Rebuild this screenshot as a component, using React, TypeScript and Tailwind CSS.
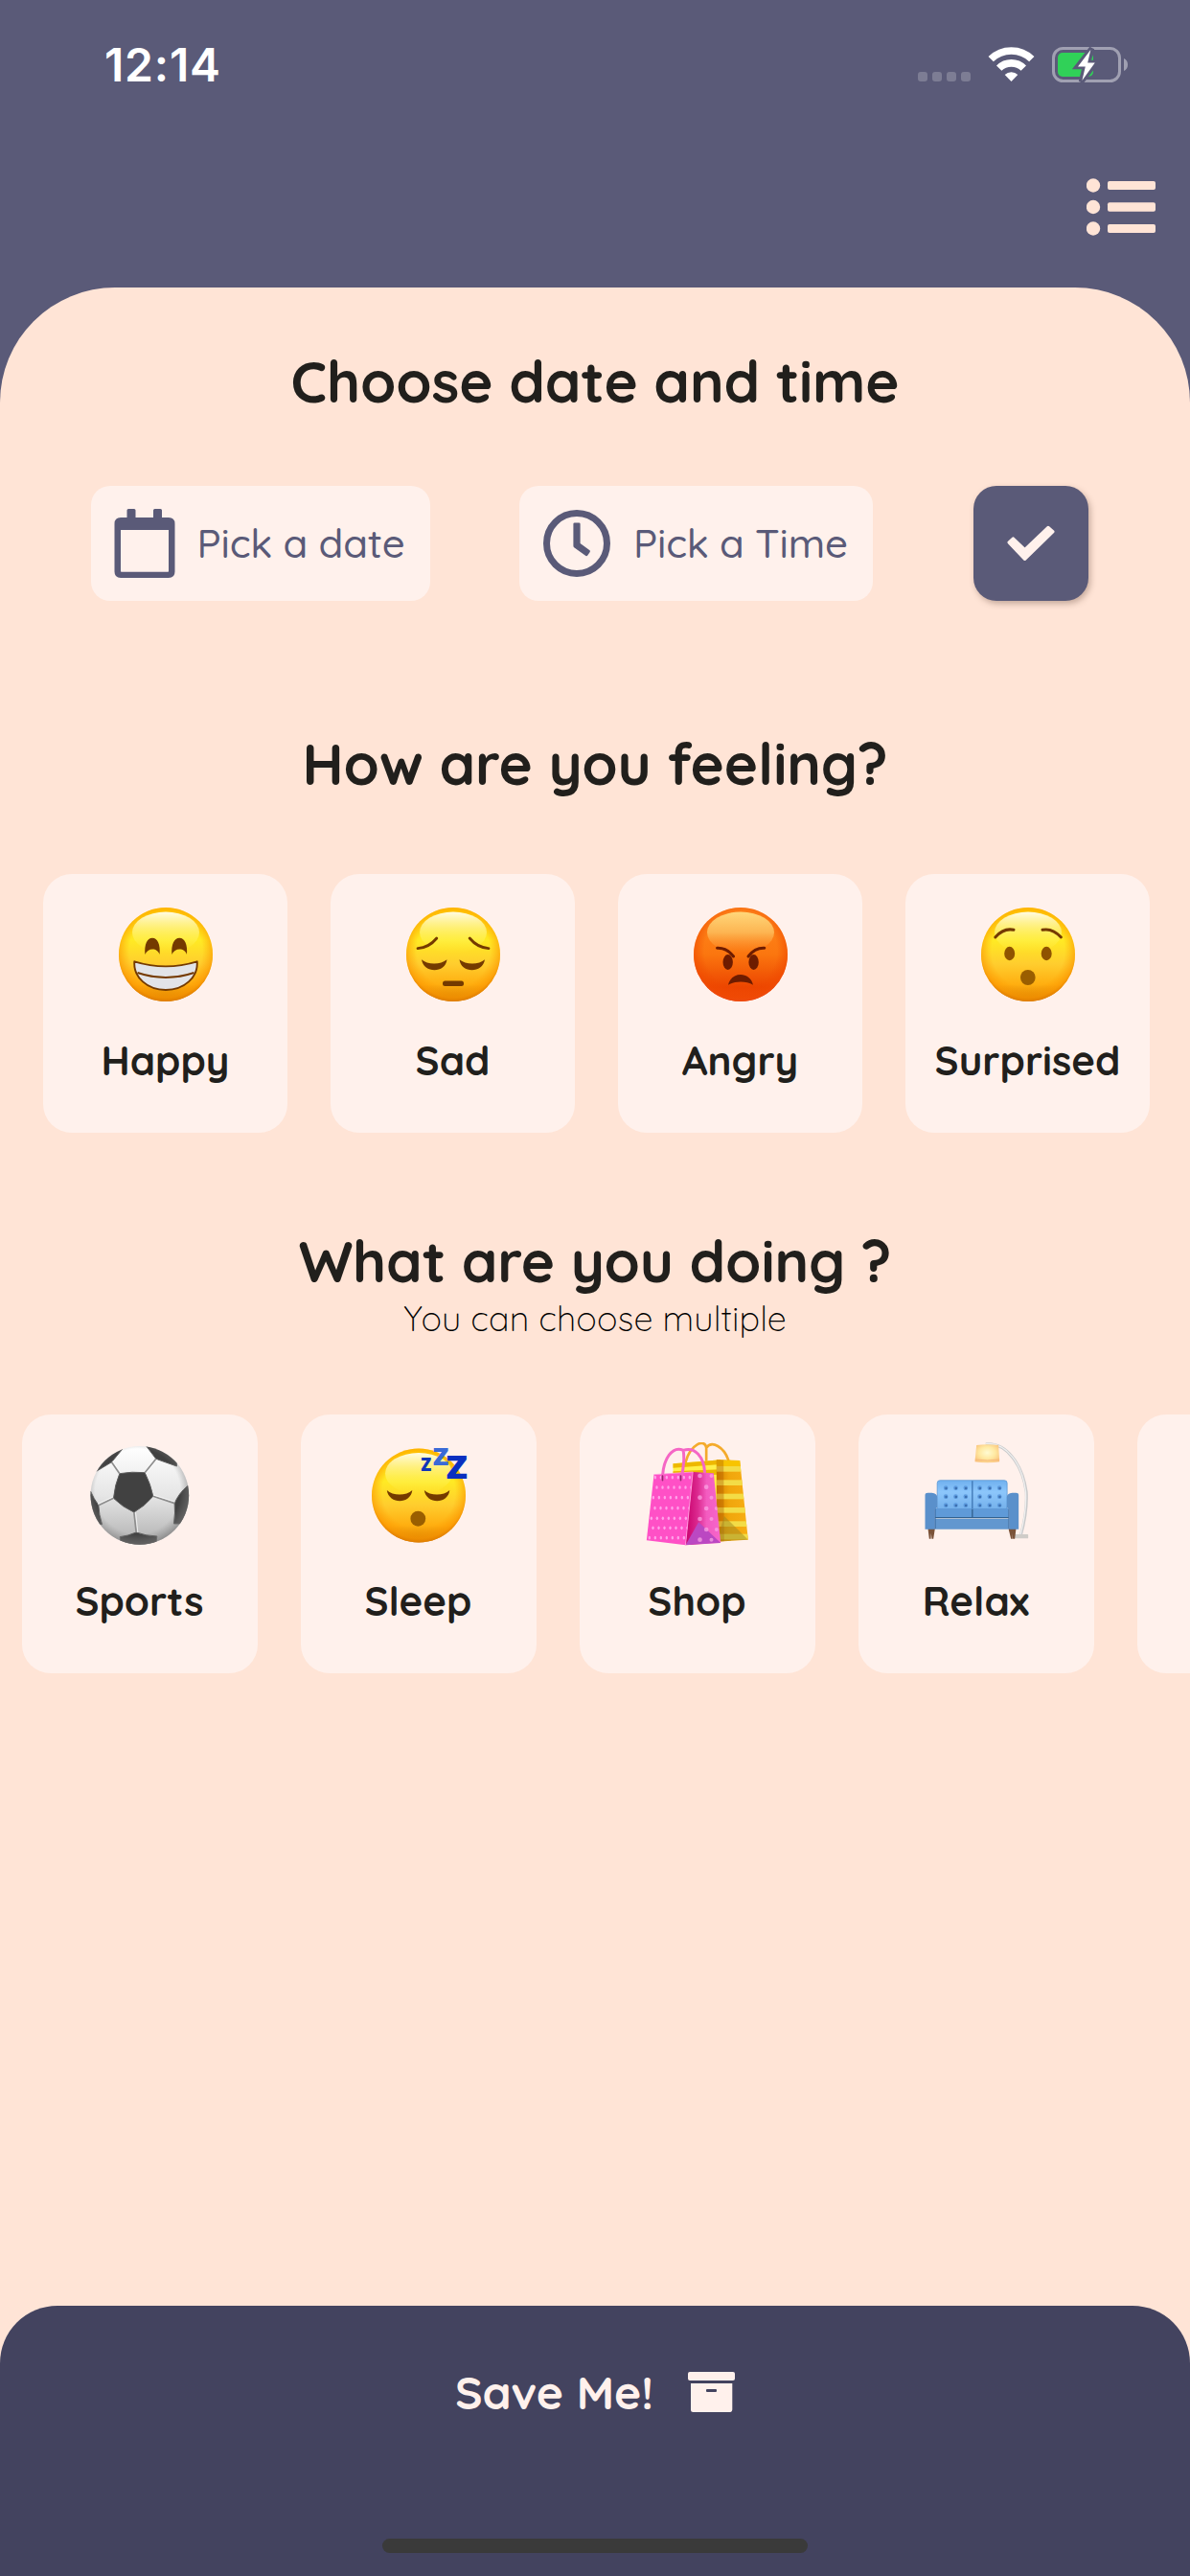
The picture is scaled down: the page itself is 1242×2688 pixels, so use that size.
import React from "react";

const BROWN = "#743a00";

function Face({ id, angry = false, cy = 55, children }: { id: string; angry?: boolean; cy?: number; children: React.ReactNode }) {
  return (
    <svg width="110" height="110" viewBox="0 0 110 110" className="overflow-visible">
      <defs>
        <linearGradient id={`${id}-base`} x1="0" y1="0" x2="0" y2="1">
          {angry ? (
            <>
              <stop offset="0" stopColor="#ff8a1e" />
              <stop offset="0.5" stopColor="#fb760f" />
              <stop offset="0.85" stopColor="#ec4500" />
              <stop offset="1" stopColor="#ee4a0c" />
            </>
          ) : (
            <>
              <stop offset="0" stopColor="#ffc400" />
              <stop offset="0.35" stopColor="#ffea24" />
              <stop offset="0.6" stopColor="#ffcd2e" />
              <stop offset="0.82" stopColor="#ffae10" />
              <stop offset="1" stopColor="#cf7800" />
            </>
          )}
        </linearGradient>
        <radialGradient id={`${id}-edge`} cx="0.5" cy="0.46" r="0.54">
          <stop offset="0.72" stopColor={angry ? "#f04a00" : "#ff9d00"} stopOpacity="0" />
          <stop offset="0.92" stopColor={angry ? "#f04a00" : "#fb9500"} stopOpacity="0.6" />
          <stop offset="1" stopColor={angry ? "#ee4a10" : "#e07c00"} stopOpacity="0.9" />
        </radialGradient>
        <linearGradient id={`${id}-shine`} x1="0" y1="0" x2="0" y2="1">
          <stop offset="0" stopColor={angry ? "#ffdc80" : "#fffff0"} stopOpacity="0.95" />
          <stop offset="0.5" stopColor={angry ? "#fdc766" : "#fff88a"} stopOpacity={angry ? "0.75" : "0.6"} />
          <stop offset="1" stopColor={angry ? "#fda040" : "#fff040"} stopOpacity="0" />
        </linearGradient>
      </defs>
      <circle cx="55" cy={cy} r="49" fill={`url(#${id}-base)`} />
      <circle cx="55" cy={cy} r="49" fill={`url(#${id}-edge)`} />
      <ellipse cx="55" cy={cy - 23} rx="35" ry="21.5" fill={`url(#${id}-shine)`} />
      {children}
    </svg>
  );
}

function Happy() {
  return (
    <Face id="happy">
      <path d="M33.4 55C32.5 45 35.5 37.8 41 37.8S49.6 45 48.6 55C46.5 47.5 36 47.5 33.4 55Z" fill={BROWN} />
      <path d="M61.4 55C60.5 45 63.8 37.8 69.3 37.8S78 45 77 55C75 47.5 64 47.5 61.4 55Z" fill={BROWN} />
      <path d="M22.3 62.3C44 69 66 69 87.7 62.3C89 79 74 92 55 92S21 79 22.3 62.3Z" fill="#e2e4e8" stroke={BROWN} strokeWidth="1.9" strokeLinejoin="round" />
      <path d="M25.5 74C44 80.5 66 80.5 84.5 74" fill="none" stroke={BROWN} strokeWidth="2" />
    </Face>
  );
}

function Sad() {
  return (
    <Face id="sad">
      <path d="M18 48.6C26 48 32.5 44.5 37.8 38" fill="none" stroke={BROWN} strokeWidth="2.8" strokeLinecap="round" />
      <path d="M92 48.6C84 48 77.5 44.5 72.2 38" fill="none" stroke={BROWN} strokeWidth="2.8" strokeLinecap="round" />
      <path d="M22 60.3C28 66 42 66 48.5 60.3C47 75 24 75 22 60.3Z" fill={BROWN} />
      <path d="M61.5 60.3C68 66 82 66 88 60.3C86 75 63 75 61.5 60.3Z" fill={BROWN} />
      <rect x="44" y="82.6" width="22" height="5.4" rx="2.5" fill={BROWN} />
    </Face>
  );
}

function Angry() {
  const c = "#6e1c00";
  return (
    <Face id="angry" angry>
      <path d="M30.5 48.3C37 48 43 51 47.5 57" fill="none" stroke={c} strokeWidth="3" strokeLinecap="round" />
      <path d="M79.8 48.3C73.5 48 67.5 51 63 57" fill="none" stroke={c} strokeWidth="3" strokeLinecap="round" />
      <ellipse cx="41.7" cy="63" rx="5.2" ry="7.9" fill={c} />
      <ellipse cx="68.6" cy="63" rx="5.2" ry="7.9" fill={c} />
      <path d="M42 86.800C45 72.500 65 72.500 68 86.800C61 82.500 49 82.500 42 86.800Z" fill={c} />
    </Face>
  );
}

function Surprised() {
  return (
    <Face id="surprised">
      <path d="M20.8 37C26 31 33 27.8 40 29.3" fill="none" stroke={BROWN} strokeWidth="3" strokeLinecap="round" />
      <path d="M89.4 37C84 31 77 27.8 70 29.3" fill="none" stroke={BROWN} strokeWidth="3" strokeLinecap="round" />
      <ellipse cx="35.7" cy="54" rx="5.5" ry="7.2" fill="#8f5300" />
      <ellipse cx="74.2" cy="54" rx="5.5" ry="7.2" fill="#8f5300" />
      <ellipse cx="54.8" cy="79" rx="7.8" ry="8" fill="#9a5e00" />
    </Face>
  );
}

function Sleep() {
  return (
    <Face id="sleep" cy={55.5}>
      <path d="M21.8 50C28 56 42 56 48.3 50C46.5 65 24 65 21.8 50Z" fill={BROWN} />
      <path d="M60.8 50C67 56 81 56 87.3 50C85.5 65 63 65 60.8 50Z" fill={BROWN} />
      <ellipse cx="54.3" cy="79.7" rx="7.9" ry="8" fill="#9a5e00" />
      <g className="font-['Open_Sans'] font-extrabold">
        <text x="57.2" y="30" fontSize="18.5" fill="#0f36b8" textLength="11" lengthAdjust="spacingAndGlyphs">Z</text>
        <text x="69.7" y="24" fontSize="25.5" fill="#3a6ad6" textLength="16.6" lengthAdjust="spacingAndGlyphs">Z</text>
        <text x="83.6" y="38" fontSize="34" fill="#0a30c0" textLength="22.5" lengthAdjust="spacingAndGlyphs">Z</text>
      </g>
    </Face>
  );
}

function Ball() {
  return (
    <svg width="110" height="110" viewBox="0 0 110 110">
      <defs>
        <linearGradient id="ball-base" x1="0" y1="0" x2="0" y2="1">
          <stop offset="0" stopColor="#ffffff" />
          <stop offset="0.5" stopColor="#e6e6e6" />
          <stop offset="1" stopColor="#b0b0b0" />
        </linearGradient>
        <radialGradient id="ball-edge" cx="0.48" cy="0.46" r="0.54">
          <stop offset="0.8" stopColor="#888" stopOpacity="0" />
          <stop offset="1" stopColor="#777" stopOpacity="0.6" />
        </radialGradient>
        <clipPath id="ball-clip"><circle cx="196" cy="211" r="154" /></clipPath>
      </defs>
      <g transform="translate(-10.5 -15) scale(0.33333)">
        <circle cx="196" cy="211" r="154" fill="url(#ball-base)" />
        <g clipPath="url(#ball-clip)">
          <g fill="#414141" stroke="#5c5c5c" strokeWidth="3" strokeLinejoin="round">
            <path d="M133 143Q172 136 212 140Q230 175 238 214Q212 245 178 264Q142 248 114 220Q118 178 133 143Z" />
            <path d="M142 66L108 107L60 136L60 60Z" />
            <path d="M216 56L247 97L312 120L310 50Z" />
            <path d="M345 182Q318 205 305 236Q308 265 303 300L370 300L370 182Z" />
            <path d="M134 341Q160 338 185 327Q215 338 250 339L245 380L140 380Z" />
            <path d="M42 198Q52 222 67 242Q68 272 78 302L30 302Z" />
          </g>
          <path d="M108 107L133 143M212 140L247 97M238 214L305 236M178 264L185 327M114 220L67 242" fill="none" stroke="#8d8d8d" strokeWidth="5" />
          <path d="M112 104L137 139M216 143L251 100M239 210L306 231M183 264L190 327M112 216L65 238" fill="none" stroke="#f8f8f8" strokeWidth="2.5" />
        </g>
        <circle cx="196" cy="211" r="154" fill="url(#ball-edge)" />
      </g>
    </svg>
  );
}

function Bags() {
  const rows = [155, 186, 218, 251, 283, 313, 344];
  const sideStripes = [120, 163, 206, 249, 292, 332];
  return (
    <svg width="110" height="110" viewBox="0 0 110 110">
      <defs>
        <linearGradient id="bag-side" x1="0" y1="0" x2="1" y2="0">
          <stop offset="0" stopColor="#c9006c" />
          <stop offset="0.35" stopColor="#dc2a90" />
          <stop offset="0.6" stopColor="#f35cc0" />
          <stop offset="1" stopColor="#f666cc" />
        </linearGradient>
        <linearGradient id="bag-gold" x1="0" y1="0" x2="1" y2="0">
          <stop offset="0" stopColor="#d88400" />
          <stop offset="0.4" stopColor="#f0a60c" />
          <stop offset="1" stopColor="#f8ae14" />
        </linearGradient>
        <clipPath id="gold-clip"><path d="M262 100L335 102L361 350L262 356Z" /></clipPath>
        <clipPath id="pink-clip"><path d="M66 146L188 138L165 367L43 352Z" /></clipPath>
        <clipPath id="pink-side-clip"><path d="M188 138L253 142L275 360L165 367Z" /></clipPath>
      </defs>
      <g transform="translate(-12.5 -15) scale(0.33333)">
        <path d="M165 108C180 50 226 32 230 62V102M230 62C248 38 285 60 299 100" fill="none" stroke="#f4ab2c" strokeWidth="8" strokeLinecap="round" />
        <path d="M126 112L275 100V250L126 200Z" fill="#fff04a" />
        <path d="M126 112L275 100V114L126 125ZM126 136L275 130V146L126 148Z" fill="#eeb800" />
        <path d="M262 100L335 102L361 350L262 356Z" fill="url(#bag-gold)" />
        <g clipPath="url(#gold-clip)">
          <path d="M260 95H340V120H260Z" fill="#f8c400" />
          {sideStripes.map((y) => <rect key={y} x="255" y={y} width="110" height="17" fill="#f3dc46" />)}
          <path d="M255 95H284L286 360H255Z" fill="#a85200" opacity="0.35" />
          <path d="M286 276L361 350L262 356Z" fill="#a08a20" opacity="0.5" />
        </g>
        <path d="M188 138L253 142L275 360L165 367Z" fill="url(#bag-side)" />
        <g clipPath="url(#pink-side-clip)">
          <path d="M206 295L275 360L165 367Z" fill="#bb48c2" />
          {[150, 185, 218, 252, 285, 318, 350].map((y, i) => (
            <g key={y} fill="#fba8e6" opacity="0.7">
              <circle cx={i % 2 ? 230 : 210} cy={y} r="7" />
              <circle cx={i % 2 ? 262 : 246} cy={y} r="6" />
            </g>
          ))}
        </g>
        <path d="M66 146L188 138L165 367L43 352Z" fill="#ff50c6" />
        <g clipPath="url(#pink-clip)" fill="#ffa2ea">
          {rows.map((y, r) => [0, 1, 2, 3, 4, 5, 6].map((c) => (
            <ellipse key={`${r}-${c}`} cx={70 - r * 3 + c * 18 + (r % 2) * 8} cy={y} rx="3.6" ry="5.5" />
          )))}
        </g>
        <path d="M66 146L188 138M188 138L165 367" stroke="#ff9adf" strokeWidth="2.5" fill="none" />
        <path d="M93 162C93 95 125 55 158 70Q164 110 150 162M158 70C195 58 222 90 225 138" fill="none" stroke="#f567c5" strokeWidth="9" strokeLinecap="round" />
        <path d="M93 150V164M150 150V164" stroke="#9a2070" strokeWidth="5" strokeLinecap="round" />
      </g>
    </svg>
  );
}

function Sofa() {
  return (
    <svg width="110" height="110" viewBox="0 0 110 110">
      <defs>
        <linearGradient id="sofa-back" x1="0" y1="0" x2="0" y2="1">
          <stop offset="0" stopColor="#6fb0ee" />
          <stop offset="0.4" stopColor="#8cc6fb" />
          <stop offset="1" stopColor="#74b0ea" />
        </linearGradient>
        <radialGradient id="lamp-glow" cx="0.5" cy="0.45" r="0.65">
          <stop offset="0" stopColor="#fffbd2" />
          <stop offset="0.5" stopColor="#ffe9a2" />
          <stop offset="1" stopColor="#f9bf78" />
        </radialGradient>
      </defs>
      <g transform="translate(-13.5 -15) scale(0.33333)">
        <path d="M235 51C300 45 350 115 362 200C365 250 355 300 344 338" fill="none" stroke="#c9cacb" strokeWidth="9" />
        <path d="M235 50C300 44 350 113 360 200C363 250 353 300 343 336" fill="none" stroke="#eeeeee" strokeWidth="4" />
        <rect x="322" y="333" width="46" height="13" rx="2" fill="#cfccc8" />
        <path d="M206 54Q240 50 275 54L278 106Q240 112 201 106Z" fill="url(#lamp-glow)" />
        <path d="M202 99Q240 105 278 99" fill="none" stroke="#f5b878" strokeWidth="3" />
        <path d="M54 315H76L71 347H66L64 330L63 347H58ZM306 315H330L326 347H320L318 330L319 347H314Z" fill="#7a5238" />
        <rect x="83" y="164" width="219" height="92" rx="9" fill="url(#sofa-back)" stroke="#4f8fd2" strokeWidth="2" />
        <path d="M193 166V280" stroke="#3e76b4" strokeWidth="4" />
        {[188, 215, 242].map((y) => [110, 141, 172, 216, 247, 278].map((x) => (
          <g key={`${x}-${y}`}>
            <circle cx={x} cy={y} r="7" fill="#5c9ade" />
            <circle cx={x + 1} cy={y + 1} r="3.8" fill="#3d6fae" />
          </g>
        )))}
        <path d="M76 252H307V280H76Z" fill="#5f9ad8" />
        <path d="M193 254V280M76 281H307" stroke="#32618f" strokeWidth="4" />
        <path d="M76 284H307V317H76Z" fill="#6297cf" />
        <path d="M45 209Q45 203 53 203H66Q83 205 83 216V250L76 254V317H45Z" fill="#5a90cb" />
        <path d="M338 209Q338 203 330 203H318Q301 205 301 216V250L308 254V317H338Z" fill="#5a90cb" />
        <path d="M77 254V315M307 254V315" stroke="#34659b" strokeWidth="2.5" />
      </g>
    </svg>
  );
}

function StatusIcons() {
  return (
    <svg width="222" height="40" viewBox="957 48 222 40">
      {[958, 973, 988, 1003].map((x) => <rect key={x} x={x} y="75" width="10" height="10" rx="3" fill="#7d7d94" />)}
      <g fill="none" stroke="#fff" strokeWidth="7.6">
        <path d="M1034.2 61.6A30.5 30.5 0 0 1 1076.8 61.6" />
        <path d="M1042.7 71.2A18 18 0 0 1 1068.3 71.2" />
      </g>
      <path d="M1055.5 85L1048.7 78A10 10 0 0 1 1062.3 78Z" fill="#fff" />
      <rect x="1099.5" y="50.5" width="69" height="34" rx="10" fill="none" stroke="#a0a0b2" strokeWidth="3" />
      <rect x="1104" y="55" width="37" height="25" rx="5" fill="#30d158" />
      <path d="M1173 61C1175.5 62 1177 64.5 1177 67.5S1175.5 73 1173 74Z" fill="#a0a0b2" />
      <path d="M1139.5 50.5L1124.5 69.5H1132.5L1128.5 85.5L1143.5 65.5H1135.5Z" fill="#fff" stroke="#5a5a78" strokeWidth="5.5" />
      <path d="M1138.3 52L1125 69.5H1132.8L1129.4 84L1142.8 65.5H1135.2Z" fill="#fff" />
    </svg>
  );
}

function ListIcon() {
  return (
    <svg width="72" height="60" viewBox="0 0 72 60" fill="#ffe4d6">
      <circle cx="7" cy="7.5" r="7.2" /><circle cx="7" cy="30" r="7.2" /><circle cx="7" cy="52.5" r="7.2" />
      <rect x="22" y="3" width="50" height="9" rx="2" /><rect x="22" y="25.2" width="50" height="9.6" rx="2" /><rect x="22" y="48" width="50" height="9" rx="2" />
    </svg>
  );
}

function CalendarIcon() {
  return (
    <svg width="64" height="72" viewBox="0 0 64 72" fill="#5a5a78">
      <path fillRule="evenodd" d="M7 9H13.5V1.5Q13.5 0 15 0H21Q22.5 0 22.500 1.500V9H41V1.5Q41 0 42.5 0H48.5Q50 0 50 1.500V9H57Q63.5 9 63.5 15.5V65.5Q63.5 72 57 72H7Q0.5 72 0.5 65.5V15.5Q0.5 9 7 9ZM7 22V65Q7 65.7 7.7 65.7H56.3Q57 65.7 57 65V22Z" />
    </svg>
  );
}

function ClockIcon() {
  return (
    <svg width="70" height="70" viewBox="0 0 70 70">
      <circle cx="35" cy="35" r="31.5" fill="none" stroke="#5a5a78" strokeWidth="7" />
      <path d="M32.7 13.5H37.3Q38.6 13.5 38.6 14.8V35L48.5 42.2Q49.3 43 48.7 44L46.3 47.6Q45.5 48.7 44.4 48L32.5 39.6Q31.4 38.8 31.4 37.5V14.8Q31.4 13.5 32.7 13.5Z" fill="#5a5a78" />
    </svg>
  );
}

function CheckIcon() {
  return (
    <svg width="50" height="38" viewBox="0 0 50 38">
      <path d="M2.2 18L6.5 14.1L18.6 25.8L43 2.6L47.8 6.8L18.6 35.3Z" fill="#fff1ec" stroke="#fff1ec" strokeWidth="3.4" strokeLinejoin="round" />
    </svg>
  );
}

function ArchiveIcon() {
  return (
    <svg width="49" height="42" viewBox="0 0 49 42" fill="#fff1ec">
      <rect width="49" height="9" rx="2" />
      <path fillRule="evenodd" d="M3 12H46.3V39.500Q46.3 42 43.8 42H5.5Q3 42 3 39.5ZM20 18Q19 18 19 19V20Q19 21 20 21H29Q30 21 30 20V19Q30 18 29 18Z" />
    </svg>
  );
}

function Card({ icon, label, className }: { icon: React.ReactNode; label: string; className: string }) {
  return (
    <div className={`flex h-[270px] shrink-0 flex-col items-center rounded-[30px] bg-[#fff1ec] pt-[29px] ${className}`}>
      {icon}
      <span className="mt-[30px] text-[42px] leading-[52px] font-bold whitespace-nowrap">{label}</span>
    </div>
  );
}

const moods = [
  { label: "Happy", icon: <Happy /> },
  { label: "Sad", icon: <Sad /> },
  { label: "Angry", icon: <Angry /> },
  { label: "Surprised", icon: <Surprised /> },
];

const activities = [
  { label: "Sports", icon: <Ball /> },
  { label: "Sleep", icon: <Sleep /> },
  { label: "Shop", icon: <Bags /> },
  { label: "Relax", icon: <Sofa /> },
  { label: "", icon: null },
];

export default function App() {
  return (
    <div className="flex h-[2688px] w-[1242px] flex-col overflow-hidden bg-[#5a5a78] font-[Quicksand,Lato,sans-serif] text-[#211f1c]">
      <header className="h-[300px] shrink-0">
        <div className="flex h-[136px] items-center justify-between pr-[63px] pl-[109px]">
          <span className="font-[Inter,sans-serif] text-[48px] leading-[48px] font-semibold tracking-[0.8px] text-white">12:14</span>
          <StatusIcons />
        </div>
        <div className="flex justify-end pt-[50px] pr-[36px]"><ListIcon /></div>
      </header>
      <main className="flex flex-1 flex-col rounded-t-[120px] bg-[#ffe4d6] pt-[60px]">
        <h1 className="text-center text-[60px] leading-[75px] font-bold tracking-[-0.14px]">Choose date and time</h1>
        <div className="mt-[72px] flex h-[120px] pl-[94.5px]">
          <button className="flex h-full w-[354px] items-center gap-[23px] rounded-[20px] bg-[#fff1ec] pl-[24px] text-[42px] font-medium tracking-[-0.15px] whitespace-nowrap text-[#5a5a78]">
            <CalendarIcon />
            <span className="pb-[2px]">Pick a date</span>
          </button>
          <button className="ml-[93px] flex h-full w-[369.5px] items-center gap-[24px] rounded-[20px] bg-[#fff1ec] pl-[25.5px] text-[42px] font-medium tracking-[-0.15px] whitespace-nowrap text-[#5a5a78]">
            <ClockIcon />
            <span className="pb-[2px]">Pick a Time</span>
          </button>
          <button className="ml-[104.5px] flex h-full w-[120px] items-center justify-center rounded-[24px] bg-[#5a5a78] shadow-[2px_3px_6px_rgba(90,60,50,0.35)]">
            <CheckIcon />
          </button>
        </div>
        <h2 className="mt-[132px] text-center text-[60px] leading-[75px] font-bold tracking-[-0.14px]">How are you feeling?</h2>
        <div className="mt-[78px] flex gap-[45px] pl-[45px]">
          {moods.map((m) => <Card key={m.label} {...m} className="w-[255px]" />)}
        </div>
        <h2 className="mt-[96px] text-center text-[60px] leading-[75px] font-bold tracking-[-0.14px]">What are you doing ?</h2>
        <p className="text-center text-[36px] leading-[45px] font-light tracking-[0.12px] text-black">You can choose multiple</p>
        <div className="mt-[78px] flex gap-[45px] overflow-hidden pl-[22.5px]">
          {activities.map((a) => <Card key={a.label} {...a} className="w-[246px]" />)}
        </div>
        <footer className="mt-auto flex h-[282px] flex-col items-center justify-between rounded-t-[60px] bg-[#43435f] pt-[60px] pb-[24px]">
          <button className="flex items-center gap-[36px] text-[48px] leading-[60px] font-bold text-[#fff1ec]">
            Save Me!
            <ArchiveIcon />
          </button>
          <div className="h-[15px] w-[444px] rounded-full bg-[#3a3a3a]" />
        </footer>
      </main>
    </div>
  );
}
